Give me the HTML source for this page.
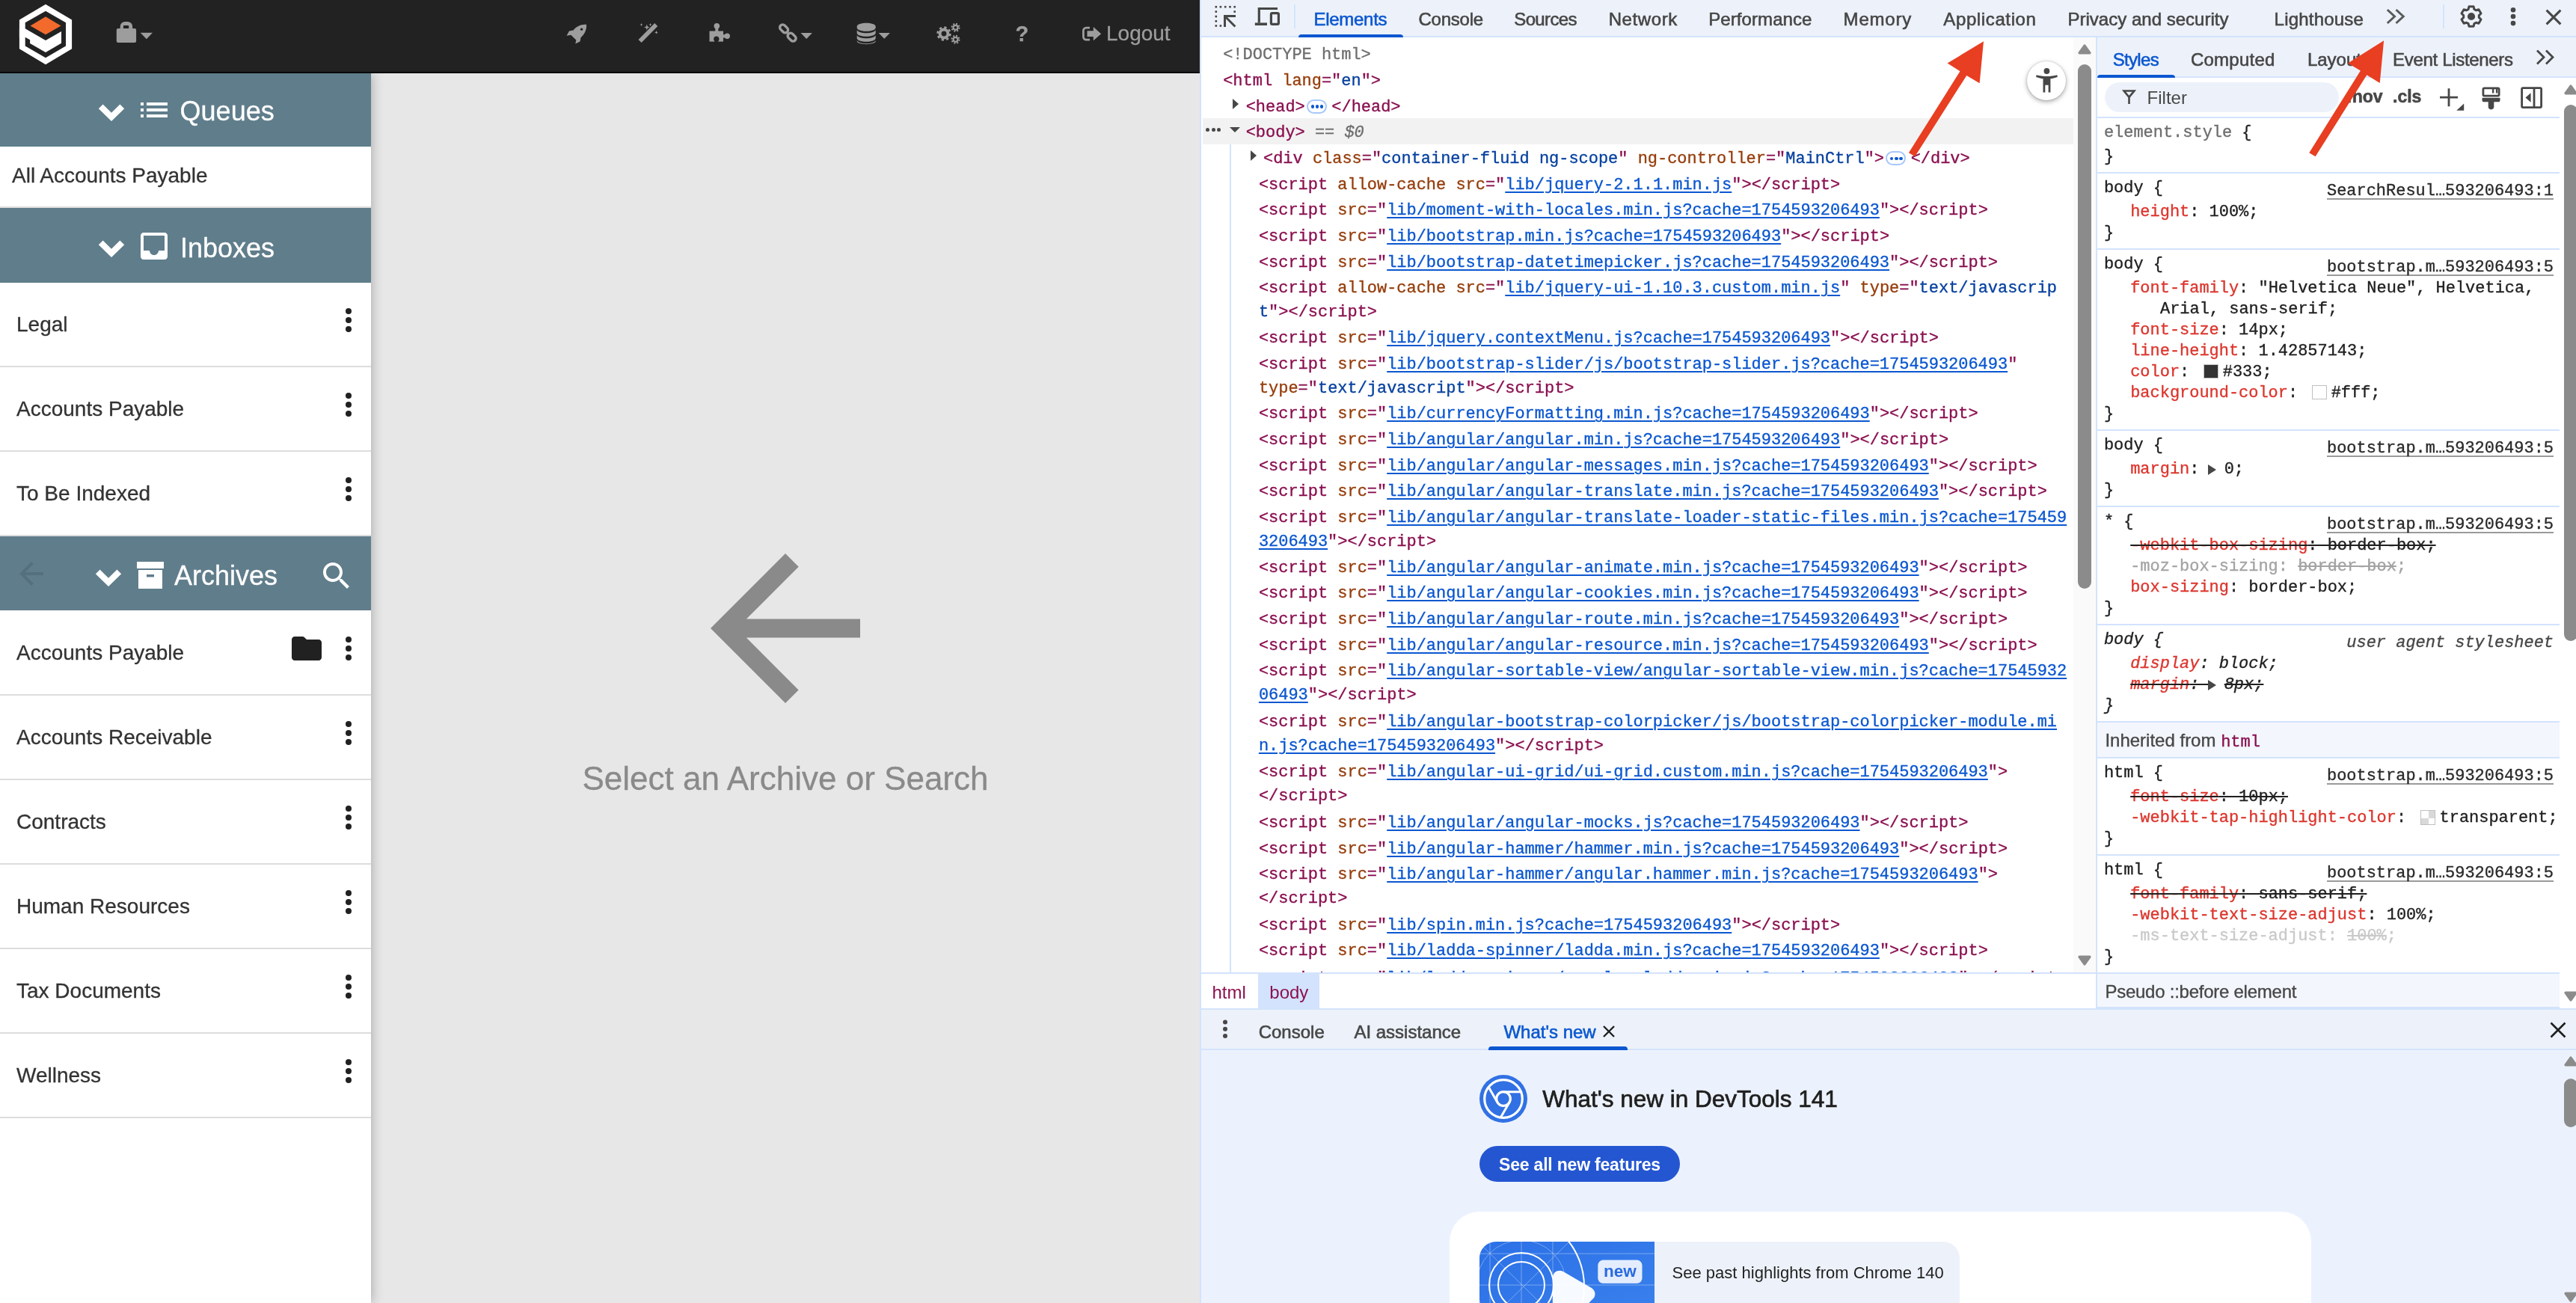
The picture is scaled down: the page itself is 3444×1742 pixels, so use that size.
<!DOCTYPE html>
<html lang="en">
<head>
<meta charset="utf-8">
<title>Archives</title>
<style>
*{box-sizing:border-box;margin:0;padding:0}
html,body{width:3444px;height:1742px;overflow:hidden;background:#fff}
body{position:relative;font-family:"Liberation Sans",Arial,sans-serif;color:#333}
.abs{position:absolute}
svg{display:block;overflow:visible}
/* ---------- app pane ---------- */
#app{-webkit-text-stroke:0.3px currentColor;will-change:transform;position:absolute;left:0;top:0;width:1604px;height:1742px;background:#e7e7e7;overflow:hidden}
#nav{position:absolute;left:0;top:0;width:1604px;height:98px;background:#222;border-bottom:2px solid #080808}
#nav .ic{position:absolute;fill:#9d9d9d}
#nav .txt{position:absolute;color:#9d9d9d;font-size:28px;line-height:32px;white-space:nowrap}
.caret{position:absolute;width:0;height:0;border-left:8px solid transparent;border-right:8px solid transparent;border-top:8px solid #9d9d9d}
#side{position:absolute;left:0;top:98px;width:496px;height:1644px;background:#fff;box-shadow:1px 0 15px rgba(0,0,0,.27)}
.hdr{position:absolute;left:0;width:496px;background:#607d8b;color:#fff;font-size:36px;white-space:nowrap}
.hdr span{position:absolute;line-height:40px}
.hdr svg{position:absolute;fill:#fff}
.row{position:absolute;left:0;width:496px;height:113px;border-bottom:2px solid #ddd;font-size:28px;color:#333;white-space:nowrap}
.row span{position:absolute;left:22px;top:40.6px;line-height:32px}
.row .dots{position:absolute;left:462px;top:34.4px;width:8px}
.row .dots i{display:block;width:8px;height:8px;border-radius:50%;background:#212121;margin-bottom:4px}
#empty{position:absolute;left:496px;top:98px;width:1108px;height:1644px}
#empty .msg{position:absolute;left:0;width:1108px;top:917.8px;text-align:center;font-size:44px;line-height:50px;color:#8a8a8a;white-space:nowrap}
/* ---------- devtools ---------- */
#dt{will-change:transform;position:absolute;left:1604px;top:0;width:1840px;height:1742px;background:#fff;border-left:2px solid #d3e3fd;font-size:24px;color:#1f1f1f;overflow:hidden}
.bar{position:absolute;background:#edf2fa;border-bottom:2px solid #d3e3fd}
.tab{-webkit-text-stroke:0.6px currentColor;position:absolute;white-space:nowrap;color:#474747;font-size:24px;line-height:30px}
.tab.sel{color:#0b57d0}
.ul{position:absolute;height:4px;background:#0b57d0;border-radius:4px 4px 0 0}
.mono{font-family:"Liberation Mono","DejaVu Sans Mono",monospace;font-size:21.96px;-webkit-text-stroke:0.35px currentColor}
.kd{display:block;width:6px;height:6px;border-radius:50%;background:#474747;margin-bottom:4px}
#el{position:absolute;left:0;top:50px;width:1196px;height:1250px;background:#fff;overflow:hidden}
#el .r{position:absolute;left:0;white-space:nowrap;line-height:32px;padding-top:3.9px}
.t{color:#8a1050}.an{color:#963e0c}.av{color:#0842a0}.lk{color:#0b57d0;text-decoration:underline;text-decoration-thickness:2px;text-underline-offset:3px}.dc{color:#6e6e6e}
.eq{color:#6e6e6e;font-style:italic}
.selbg{position:absolute;left:2px;width:1164px;background:#f2f2f2}
.guide{position:absolute;left:38.4px;top:142.6px;width:2px;height:1200px;background:#d3e3fd}
.arr{position:absolute;top:7.8px;width:0;height:0;border-left:8.3px solid #474747;border-top:7.6px solid transparent;border-bottom:7.6px solid transparent}
.arr.d{top:11.8px;border-left:7.85px solid transparent;border-right:7.85px solid transparent;border-top:7.7px solid #474747;border-bottom:0}
.dots3{position:absolute;left:6.3px;top:12.9px;width:22px;height:5px}
.dots3 i{display:block;float:left;width:5px;height:5px;border-radius:50%;background:#474747;margin-right:2.3px}
.pill{display:inline-block;width:27px;height:19px;border:2px solid #a8c7fa;border-radius:10px;margin:0 6.2px 0 2.4px;vertical-align:4px;padding:5.3px 0 0 3.6px;line-height:0;font-size:0;white-space:nowrap;background:#fff}
.pill i{display:inline-block;width:4.4px;height:4.4px;border-radius:50%;background:#0b57d0;margin-right:1.8px}
#st{position:absolute;left:1198px;top:50px;width:640px;height:1298px;background:#fff;overflow:hidden}
#secs{position:absolute;left:0;top:106px;width:618px;color:#1f1f1f}
.sec{border-top:2px solid #d3e3fd;padding:6.13px 0 5.87px;position:relative}
.sl{height:28px;line-height:28px;margin-bottom:4px;padding-left:8.9px;white-space:nowrap;position:relative}
.es{color:#6e6e6e}
.lnk{position:absolute;right:8px;top:4px;text-decoration:underline;text-decoration-color:#9a9a9a;text-decoration-thickness:2px;text-underline-offset:4px;color:#2a2a2a}
.lnk.nou{text-decoration:none;color:#474747}
.pl{height:28px;line-height:28px;padding-left:44.2px;white-space:nowrap}
.pl.w{padding-left:84px}
.pl0{height:28px;line-height:28px;padding-left:8.9px}
.pn{color:#dc362e}
.lt{text-decoration:line-through;text-decoration-color:#1f1f1f;text-decoration-thickness:2px}
.gr{color:#a3a3a3}.gr2{color:#c9c9c9}
.ltg{text-decoration:line-through;text-decoration-thickness:2px}
.sw{display:inline-block;width:19.6px;height:19.6px;border:1.5px solid #c0c0c0;margin:0 5.9px 0 5.8px;vertical-align:-3.4px}
.sw.chk{background:conic-gradient(#d9d9d9 0 25%,#fff 0 50%,#d9d9d9 0 75%,#fff 0) 0 0/19.6px 19.6px !important}
.tri{display:inline-block;width:0;height:0;border-left:11.7px solid #474747;border-top:7.3px solid transparent;border-bottom:7.3px solid transparent;margin:0 10.4px 0 -1.3px;vertical-align:-2px}
.it{font-style:italic}
.inh{border-top:2px solid #d3e3fd;height:48.3px;background:#f3f6fc;font-family:"Liberation Sans",Arial,sans-serif;font-size:24px;line-height:30px;padding:9px 0 0 10.4px;color:#474747;white-space:nowrap}
.sbar{position:absolute;width:18px;background:#8b8b8b;border-radius:9px}
.sup{position:absolute;width:0;height:0;border-left:9px solid transparent;border-right:9px solid transparent;border-bottom:13.7px solid #8b8b8b}
.sdn{position:absolute;width:0;height:0;border-left:9px solid transparent;border-right:9px solid transparent;border-top:13.7px solid #8b8b8b}
.kd.k2{width:6.6px;height:6.6px;margin-bottom:2.3px}
</style>
</head>
<body>
<div id="app">
  <div id="empty">
    <svg class="abs" style="left:404px;top:592px" width="300" height="300" viewBox="0 0 24 24"><path fill="#8a8a8a" d="M20 11H7.83l5.59-5.59L12 4l-8 8 8 8 1.41-1.41L7.83 13H20v-2z"/></svg>
    <div class="msg">Select an Archive or Search</div>
  </div>
  <div id="side">

    <div class="hdr" style="top:0;height:97.7px">
      <svg style="left:131px;top:41px" width="36" height="24" viewBox="0 0 36 24"><path d="M18 23 L0.8 6.2 L6.6 0.6 L18 11.8 L29.4 0.6 L35.2 6.2 Z"/></svg>
      <svg style="left:181.6px;top:25.4px" width="48" height="48" viewBox="0 0 24 24"><path d="M3 13h2v-2H3v2zm0 4h2v-2H3v2zm0-8h2V7H3v2zm4 4h14v-2H7v2zm0 4h14v-2H7v2zM7 7v2h14V7H7z"/></svg>
      <span style="left:240.6px;top:31px">Queues</span>
    </div>
    <div class="row" style="top:97.7px;height:82.2px"><span style="left:16px;top:23.7px">All Accounts Payable</span></div>
    <div class="hdr" style="top:179.9px;height:99.75px">
      <svg style="left:131px;top:43px" width="36" height="24" viewBox="0 0 36 24"><path d="M18 23 L0.8 6.2 L6.6 0.6 L18 11.8 L29.4 0.6 L35.2 6.2 Z"/></svg>
      <svg style="left:182px;top:27px" width="48" height="48" viewBox="0 0 24 24"><path d="M19 3H4.99c-1.11 0-1.98.89-1.98 2L3 19c0 1.1.88 2 1.99 2H19c1.1 0 2-.9 2-2V5c0-1.11-.9-2-2-2zm0 12h-4c0 1.66-1.35 3-3 3s-3-1.34-3-3H4.99V5H19v10z"/></svg>
      <span style="left:241px;top:33.7px">Inboxes</span>
    </div>
    <div class="row" style="top:279.65px"><span>Legal</span><div class="dots"><i></i><i></i><i></i></div></div>
    <div class="row" style="top:392.65px"><span>Accounts Payable</span><div class="dots"><i></i><i></i><i></i></div></div>
    <div class="row" style="top:505.65px"><span>To Be Indexed</span><div class="dots"><i></i><i></i><i></i></div></div>
    <div class="hdr" style="top:618.65px;height:99.85px">
      <svg style="left:18px;top:26px;fill:#54707d" width="48" height="48" viewBox="0 0 24 24"><path d="M20 11H7.83l5.59-5.59L12 4l-8 8 8 8 1.41-1.41L7.83 13H20v-2z"/></svg>
      <svg style="left:127px;top:44px" width="36" height="24" viewBox="0 0 36 24"><path d="M18 23 L0.8 6.2 L6.6 0.6 L18 11.8 L29.4 0.6 L35.2 6.2 Z"/></svg>
      <svg style="left:183px;top:34.5px" width="36" height="36" viewBox="0 0 36 36"><path d="M0 0h36v9H0z M2 11h32v25H2z M13 17v3.4h10V17z" fill-rule="evenodd"/></svg>
      <span style="left:233px;top:33px">Archives</span>
      <svg style="left:426px;top:29px" width="48" height="48" viewBox="0 0 24 24"><path d="M15.5 14h-.79l-.28-.27C15.41 12.59 16 11.11 16 9.5 16 5.91 13.09 3 9.5 3S3 5.91 3 9.5 5.91 16 9.5 16c1.61 0 3.09-.59 4.23-1.57l.27.28v.79l5 4.99L20.49 19l-4.99-5zm-6 0C7.01 14 5 11.99 5 9.5S7.01 5 9.5 5 14 7.01 14 9.5 11.99 14 9.5 14z"/></svg>
    </div>
    <div class="row" style="top:718.50px"><span>Accounts Payable</span><svg class="abs" style="left:386px;top:26.5px" width="48" height="48" viewBox="0 0 24 24"><path fill="#212121" d="M10.59 4.59C10.21 4.21 9.7 4 9.17 4H4c-1.1 0-1.99.9-1.99 2L2 18c0 1.1.9 2 2 2h16c1.1 0 2-.9 2-2V8c0-1.1-.9-2-2-2h-8l-1.41-1.41z"/></svg><div class="dots"><i></i><i></i><i></i></div></div>
    <div class="row" style="top:831.50px"><span>Accounts Receivable</span><div class="dots"><i></i><i></i><i></i></div></div>
    <div class="row" style="top:944.50px"><span>Contracts</span><div class="dots"><i></i><i></i><i></i></div></div>
    <div class="row" style="top:1057.50px"><span>Human Resources</span><div class="dots"><i></i><i></i><i></i></div></div>
    <div class="row" style="top:1170.50px"><span>Tax Documents</span><div class="dots"><i></i><i></i><i></i></div></div>
    <div class="row" style="top:1283.50px"><span>Wellness</span><div class="dots"><i></i><i></i><i></i></div></div>
  </div>
  <div id="nav">

    <svg class="abs" style="left:0;top:0" width="240" height="96" viewBox="0 0 240 96">
      <polygon fill="#fff" points="61,5.8 96.1,26.6 96.1,65.2 61,86.2 25.9,65.2 25.9,26.6"/>
      <polygon fill="#222" points="61,14.7 88,30.3 88,61.5 61,77.3 33.7,61.5 33.7,30.3"/>
      <polygon fill="#f26a2c" points="61,22.2 81.5,34.5 61,46.3 40.5,34.5"/>
      <polygon fill="#fff" points="25.9,38.2 33.7,38.2 61,54 82,41.9 82,57.8 61,69.9 40.1,58 40.1,53.3 33.7,49.8 25.9,49.8"/>
      <g fill="#9d9d9d">
        <path fill-rule="evenodd" d="M160.7 38 V35.6 A6.7 6.7 0 0 1 167.4 28.9 H170.4 A6.7 6.7 0 0 1 177.1 35.6 V38 H180 A2.1 2.1 0 0 1 182.1 40.1 V54.9 A2.1 2.1 0 0 1 180 57 H157.9 A2.1 2.1 0 0 1 155.8 54.9 V40.1 A2.1 2.1 0 0 1 157.9 38 Z M164.9 38 H172.2 V35 A1 1 0 0 0 171.2 34 H165.9 A1 1 0 0 0 164.9 35 Z"/>
        <polygon points="187.7,43.8 204,43.8 195.85,52.2"/>
      </g>
    </svg>
    <svg class="abs" style="left:740px;top:20px" width="860" height="60" viewBox="740 20 860 60">
      <g fill="#9d9d9d">
        <!-- rocket -->
        <path fill-rule="evenodd" d="M784 32.8 C776 32.3 770.5 35.5 766.5 40.5 L761 41.5 L757.5 47.8 L763.3 46.8 L770.3 53.5 L769.3 58.4 L775.5 55.5 L776.5 50.2 C781.5 46 784.5 40 784 32.8 Z M777.6 37.4 a1.7 1.7 0 1 0 0.01 0 Z"/>
        <!-- wand -->
        <path d="M875.2 30.9 L879.3 35 L857.6 57 L853.5 52.9 Z"/>
        <path d="M864.8 32.5 l1 2.9 2.9 1 -2.9 1 -1 2.9 -1 -2.9 -2.9 -1 2.9 -1z M857.5 31 l.6 1.4 1.4 .6 -1.4 .6 -.6 1.4 -.6 -1.4 -1.4 -.6 1.4 -.6z M869.5 31 l.6 1.4 1.4 .6 -1.4 .6 -.6 1.4 -.6 -1.4 -1.4 -.6 1.4 -.6z M877.5 41 l.7 1.7 1.7 .7 -1.7 .7 -.7 1.7 -.7 -1.7 -1.7 -.7 1.7 -.7z"/>
        <!-- puzzle -->
        <path d="M948.5 41.5H967V55.6H948.5Z"/><circle cx="958.3" cy="34.7" r="3.8"/><path d="M956.3 36H960.3V42H956.3Z"/><circle cx="972.2" cy="48.3" r="3.7"/><path d="M966 46.2H971V50.4H966Z"/><circle cx="957.8" cy="52.2" r="3.6" fill="#222"/><path d="M955.6 53H960V56H955.6Z" fill="#222"/>
        <!-- link -->
        <g fill="none" stroke="#9d9d9d" stroke-width="3.4">
          <rect x="-3.8" y="-6.2" width="7.6" height="12.4" rx="3.8" transform="translate(1048.1 38.4) rotate(-45)"/>
          <rect x="-3.8" y="-6.2" width="7.6" height="12.4" rx="3.8" transform="translate(1058.6 49.6) rotate(-45)"/>
        </g>
        <polygon points="1070.5,44 1085.9,44 1078.2,51.9"/>
        <!-- database -->
        <path d="M1145.7 35.5 C1145.7 29.2 1170.7 29.2 1170.7 35.5 V37 C1170.7 43.3 1145.7 43.3 1145.7 37 Z"/>
        <path d="M1145.7 40.3 C1149 45.6 1167.4 45.6 1170.7 40.3 V44 C1170.7 50.3 1145.7 50.3 1145.7 44 Z"/>
        <path d="M1145.7 47.3 C1149 52.6 1167.4 52.6 1170.7 47.3 V51 C1170.7 57.3 1145.7 57.3 1145.7 51 Z"/>
        <path d="M1145.7 54.3 C1149 59.6 1167.4 59.6 1170.7 54.3 V55 C1170.7 60.5 1145.7 60.5 1145.7 55 Z"/>
        <polygon points="1174.6,43.9 1189.9,43.9 1182.25,51.7"/>
        <!-- cogs -->
        <g fill="none" stroke="#9d9d9d">
          <circle cx="1262" cy="45" r="5.4" stroke-width="4"/>
          <circle cx="1262" cy="45" r="8.4" stroke-width="2.6" stroke-dasharray="3.3 3.3"/>
          <circle cx="1277.5" cy="36.8" r="3" stroke-width="2.2"/>
          <circle cx="1277.5" cy="36.8" r="5" stroke-width="2" stroke-dasharray="1.96 1.96"/>
          <circle cx="1277.5" cy="52.8" r="3" stroke-width="2.2"/>
          <circle cx="1277.5" cy="52.8" r="5" stroke-width="2" stroke-dasharray="1.96 1.96"/>
        </g>
        <!-- logout -->
        <path d="M1457 35.8 H1452.2 A5.2 5.2 0 0 0 1447 41 V49.3 A5.2 5.2 0 0 0 1452.2 54.5 H1457 V51.7 H1452.4 A2.6 2.6 0 0 1 1449.8 49.1 V41.2 A2.6 2.6 0 0 1 1452.4 38.6 H1457 Z"/>
        <path d="M1453.5 41.3 H1461.8 V36 L1472.2 45.15 L1461.8 54.3 V49 H1453.5 Z"/>
      </g>
    </svg>
    <div class="txt" style="left:1357.6px;top:29px;font-weight:700;font-size:29px">?</div>
    <div class="txt" style="left:1479px;top:28.8px">Logout</div>
  </div>
</div>
<div id="dt">
<div class="bar" style="left:0;top:0;width:1838px;height:50px"></div>
<svg class="abs" style="left:0;top:0" width="60" height="48" viewBox="0 0 60 48"><g fill="#474747"><rect x="18.5" y="7.9" width="2.6" height="2.6"/><rect x="24.6" y="7.9" width="2.6" height="2.6"/><rect x="30.9" y="7.9" width="2.6" height="2.6"/><rect x="37.2" y="7.9" width="2.6" height="2.6"/><rect x="43.4" y="7.9" width="2.6" height="2.6"/><rect x="18.5" y="14.3" width="2.6" height="2.6"/><rect x="18.5" y="20.7" width="2.6" height="2.6"/><rect x="18.5" y="27.0" width="2.6" height="2.6"/><rect x="18.5" y="33.2" width="2.6" height="2.6"/><rect x="43.4" y="14.3" width="2.6" height="2.6"/><rect x="24.6" y="33.2" width="2.6" height="2.6"/></g><path d="M46 21.6H31.5V36 M32.4 22.5L45.4 35.5" fill="none" stroke="#474747" stroke-width="3"/></svg>
<svg class="abs" style="left:70px;top:6px" width="36" height="32" viewBox="0 0 36 32"><g fill="none" stroke="#474747" stroke-width="3.2">
<path d="M7.3 24.5V5.5H32"/><path d="M1.8 26.2H18" stroke-width="3.6"/><rect x="23.4" y="11.6" width="10" height="14.8" rx="1.6"/></g></svg>
<div class="abs" style="left:124px;top:6px;width:2px;height:32px;background:#d3e3fd"></div>
<div class="tab sel" style="left:150.4px;top:10.6px;letter-spacing:-0.27px">Elements</div>
<div class="tab" style="left:290.4px;top:10.6px;letter-spacing:-0.22px">Console</div>
<div class="tab" style="left:418.3px;top:10.6px;letter-spacing:-0.64px">Sources</div>
<div class="tab" style="left:544.7px;top:10.6px;letter-spacing:0.6px">Network</div>
<div class="tab" style="left:678.3px;top:10.6px;letter-spacing:0.07px">Performance</div>
<div class="tab" style="left:858.6px;top:10.6px;letter-spacing:0.79px">Memory</div>
<div class="tab" style="left:992.3px;top:10.6px;letter-spacing:0.62px">Application</div>
<div class="tab" style="left:1158.4px;top:10.6px;letter-spacing:0.02px">Privacy and security</div>
<div class="tab" style="left:1434.6px;top:10.6px;letter-spacing:0.2px">Lighthouse</div>
<div class="ul" style="left:129.7px;top:46px;width:140px"></div>
<svg class="abs" style="left:1583.5px;top:11px" width="26" height="22" viewBox="0 0 26 22"><path d="M1.8 2L11.5 11L1.8 20M13.5 2L23.2 11L13.5 20" fill="none" stroke="#5a5a5a" stroke-width="3"/></svg>
<div class="abs" style="left:1660px;top:6px;width:2px;height:32px;background:#d3e3fd"></div>
<svg class="abs" style="left:1682px;top:6px" width="32" height="32" viewBox="0 0 32 32"><path d="M19.90 6.36 L19.06 2.75 L12.94 2.75 L12.10 6.36 L9.60 7.80 L6.05 6.72 L2.99 12.02 L5.70 14.55 L5.70 17.45 L2.99 19.98 L6.05 25.28 L9.60 24.20 L12.10 25.64 L12.94 29.25 L19.06 29.25 L19.90 25.64 L22.40 24.20 L25.95 25.28 L29.01 19.98 L26.30 17.45 L26.30 14.55 L29.01 12.02 L25.95 6.72 L22.40 7.80Z" fill="none" stroke="#474747" stroke-width="3" stroke-linejoin="round"/><circle cx="16" cy="16" r="5.1" fill="#474747"/></svg>
<svg class="abs" style="left:1749.9px;top:8px" width="8" height="30" viewBox="0 0 8 30"><g fill="#474747"><circle cx="4" cy="5.3" r="3.3"/><circle cx="4" cy="14" r="3.3"/><circle cx="4" cy="23.1" r="3.3"/></g></svg>
<svg class="abs" style="left:1797px;top:11.6px" width="22" height="22" viewBox="0 0 22 22"><path d="M1.6 1.6L20.4 20.4M20.4 1.6L1.6 20.4" fill="none" stroke="#474747" stroke-width="3"/></svg>
<div id="el" class="mono">
<div class="guide"></div>
<div class="r" style="top:4.40px;padding-left:29.2px"><span class="dc">&lt;!DOCTYPE html&gt;</span></div>
<div class="r" style="top:39.07px;padding-left:29.2px"><span class="t">&lt;html</span><span class="an"> lang</span><span class="t">="</span><span class="av">en</span><span class="t">"&gt;</span></div>
<div class="r" style="top:73.74px;padding-left:59.7px"><span class="arr" style="left:41.9px"></span><span class="t">&lt;head&gt;</span><span class="pill"><i></i><i></i><i></i></span><span class="t">&lt;/head&gt;</span></div>
<div class="selbg" style="top:108.11px;height:34.67px"></div>
<div class="r" style="top:108.41px;padding-left:59.7px"><span class="dots3"><i></i><i></i><i></i></span><span class="arr d" style="left:38.2px"></span><span class="t">&lt;body&gt;</span><span class="eq"> == $0</span></div>
<div class="r" style="top:143.08px;padding-left:83px"><span class="arr" style="left:65.6px"></span><span class="t">&lt;div</span><span class="an"> class</span><span class="t">="</span><span class="av">container-fluid ng-scope</span><span class="t">"</span><span class="an"> ng-controller</span><span class="t">="</span><span class="av">MainCtrl</span><span class="t">"&gt;</span><span class="pill"><i></i><i></i><i></i></span><span class="t">&lt;/div&gt;</span></div>
<div class="r" style="top:177.75px;padding-left:76.9px"><span class="t">&lt;script</span><span class="an"> allow-cache</span><span class="an"> src</span><span class="t">="</span><span class="lk">lib/jquery-2.1.1.min.js</span><span class="t">"</span><span class="t">&gt;</span><span class="t">&lt;/script&gt;</span></div>
<div class="r" style="top:212.42px;padding-left:76.9px"><span class="t">&lt;script</span><span class="an"> src</span><span class="t">="</span><span class="lk">lib/moment-with-locales.min.js?cache=1754593206493</span><span class="t">"</span><span class="t">&gt;</span><span class="t">&lt;/script&gt;</span></div>
<div class="r" style="top:247.09px;padding-left:76.9px"><span class="t">&lt;script</span><span class="an"> src</span><span class="t">="</span><span class="lk">lib/bootstrap.min.js?cache=1754593206493</span><span class="t">"</span><span class="t">&gt;</span><span class="t">&lt;/script&gt;</span></div>
<div class="r" style="top:281.76px;padding-left:76.9px"><span class="t">&lt;script</span><span class="an"> src</span><span class="t">="</span><span class="lk">lib/bootstrap-datetimepicker.js?cache=1754593206493</span><span class="t">"</span><span class="t">&gt;</span><span class="t">&lt;/script&gt;</span></div>
<div class="r" style="top:316.43px;padding-left:76.9px"><span class="t">&lt;script</span><span class="an"> allow-cache</span><span class="an"> src</span><span class="t">="</span><span class="lk">lib/jquery-ui-1.10.3.custom.min.js</span><span class="t">"</span><span class="an"> type</span><span class="t">="</span><span class="av">text/javascrip</span><br><span class="av">t</span><span class="t">"</span><span class="t">&gt;</span><span class="t">&lt;/script&gt;</span></div>
<div class="r" style="top:383.10px;padding-left:76.9px"><span class="t">&lt;script</span><span class="an"> src</span><span class="t">="</span><span class="lk">lib/jquery.contextMenu.js?cache=1754593206493</span><span class="t">"</span><span class="t">&gt;</span><span class="t">&lt;/script&gt;</span></div>
<div class="r" style="top:417.77px;padding-left:76.9px"><span class="t">&lt;script</span><span class="an"> src</span><span class="t">="</span><span class="lk">lib/bootstrap-slider/js/bootstrap-slider.js?cache=1754593206493</span><span class="t">"</span><br><span class="an">type</span><span class="t">="</span><span class="av">text/javascript</span><span class="t">"</span><span class="t">&gt;</span><span class="t">&lt;/script&gt;</span></div>
<div class="r" style="top:484.44px;padding-left:76.9px"><span class="t">&lt;script</span><span class="an"> src</span><span class="t">="</span><span class="lk">lib/currencyFormatting.min.js?cache=1754593206493</span><span class="t">"</span><span class="t">&gt;</span><span class="t">&lt;/script&gt;</span></div>
<div class="r" style="top:519.11px;padding-left:76.9px"><span class="t">&lt;script</span><span class="an"> src</span><span class="t">="</span><span class="lk">lib/angular/angular.min.js?cache=1754593206493</span><span class="t">"</span><span class="t">&gt;</span><span class="t">&lt;/script&gt;</span></div>
<div class="r" style="top:553.78px;padding-left:76.9px"><span class="t">&lt;script</span><span class="an"> src</span><span class="t">="</span><span class="lk">lib/angular/angular-messages.min.js?cache=1754593206493</span><span class="t">"</span><span class="t">&gt;</span><span class="t">&lt;/script&gt;</span></div>
<div class="r" style="top:588.45px;padding-left:76.9px"><span class="t">&lt;script</span><span class="an"> src</span><span class="t">="</span><span class="lk">lib/angular/angular-translate.min.js?cache=1754593206493</span><span class="t">"</span><span class="t">&gt;</span><span class="t">&lt;/script&gt;</span></div>
<div class="r" style="top:623.12px;padding-left:76.9px"><span class="t">&lt;script</span><span class="an"> src</span><span class="t">="</span><span class="lk">lib/angular/angular-translate-loader-static-files.min.js?cache=175459</span><br><span class="lk">3206493</span><span class="t">"</span><span class="t">&gt;</span><span class="t">&lt;/script&gt;</span></div>
<div class="r" style="top:689.79px;padding-left:76.9px"><span class="t">&lt;script</span><span class="an"> src</span><span class="t">="</span><span class="lk">lib/angular/angular-animate.min.js?cache=1754593206493</span><span class="t">"</span><span class="t">&gt;</span><span class="t">&lt;/script&gt;</span></div>
<div class="r" style="top:724.46px;padding-left:76.9px"><span class="t">&lt;script</span><span class="an"> src</span><span class="t">="</span><span class="lk">lib/angular/angular-cookies.min.js?cache=1754593206493</span><span class="t">"</span><span class="t">&gt;</span><span class="t">&lt;/script&gt;</span></div>
<div class="r" style="top:759.13px;padding-left:76.9px"><span class="t">&lt;script</span><span class="an"> src</span><span class="t">="</span><span class="lk">lib/angular/angular-route.min.js?cache=1754593206493</span><span class="t">"</span><span class="t">&gt;</span><span class="t">&lt;/script&gt;</span></div>
<div class="r" style="top:793.80px;padding-left:76.9px"><span class="t">&lt;script</span><span class="an"> src</span><span class="t">="</span><span class="lk">lib/angular/angular-resource.min.js?cache=1754593206493</span><span class="t">"</span><span class="t">&gt;</span><span class="t">&lt;/script&gt;</span></div>
<div class="r" style="top:828.47px;padding-left:76.9px"><span class="t">&lt;script</span><span class="an"> src</span><span class="t">="</span><span class="lk">lib/angular-sortable-view/angular-sortable-view.min.js?cache=17545932</span><br><span class="lk">06493</span><span class="t">"</span><span class="t">&gt;</span><span class="t">&lt;/script&gt;</span></div>
<div class="r" style="top:895.97px;padding-left:76.9px"><span class="t">&lt;script</span><span class="an"> src</span><span class="t">="</span><span class="lk">lib/angular-bootstrap-colorpicker/js/bootstrap-colorpicker-module.mi</span><br><span class="lk">n.js?cache=1754593206493</span><span class="t">"</span><span class="t">&gt;</span><span class="t">&lt;/script&gt;</span></div>
<div class="r" style="top:963.47px;padding-left:76.9px"><span class="t">&lt;script</span><span class="an"> src</span><span class="t">="</span><span class="lk">lib/angular-ui-grid/ui-grid.custom.min.js?cache=1754593206493</span><span class="t">"</span><span class="t">&gt;</span><br><span class="t">&lt;/script&gt;</span></div>
<div class="r" style="top:1030.97px;padding-left:76.9px"><span class="t">&lt;script</span><span class="an"> src</span><span class="t">="</span><span class="lk">lib/angular/angular-mocks.js?cache=1754593206493</span><span class="t">"</span><span class="t">&gt;</span><span class="t">&lt;/script&gt;</span></div>
<div class="r" style="top:1065.64px;padding-left:76.9px"><span class="t">&lt;script</span><span class="an"> src</span><span class="t">="</span><span class="lk">lib/angular-hammer/hammer.min.js?cache=1754593206493</span><span class="t">"</span><span class="t">&gt;</span><span class="t">&lt;/script&gt;</span></div>
<div class="r" style="top:1100.31px;padding-left:76.9px"><span class="t">&lt;script</span><span class="an"> src</span><span class="t">="</span><span class="lk">lib/angular-hammer/angular.hammer.min.js?cache=1754593206493</span><span class="t">"</span><span class="t">&gt;</span><br><span class="t">&lt;/script&gt;</span></div>
<div class="r" style="top:1167.81px;padding-left:76.9px"><span class="t">&lt;script</span><span class="an"> src</span><span class="t">="</span><span class="lk">lib/spin.min.js?cache=1754593206493</span><span class="t">"</span><span class="t">&gt;</span><span class="t">&lt;/script&gt;</span></div>
<div class="r" style="top:1202.48px;padding-left:76.9px"><span class="t">&lt;script</span><span class="an"> src</span><span class="t">="</span><span class="lk">lib/ladda-spinner/ladda.min.js?cache=1754593206493</span><span class="t">"</span><span class="t">&gt;</span><span class="t">&lt;/script&gt;</span></div>
<div class="r" style="top:1238.75px;padding-left:76.9px"><span class="t">&lt;script</span><span class="an"> src</span><span class="t">="</span><span class="lk">lib/ladda-spinner/angular-ladda.min.js?cache=1754593206493</span><span class="t">"</span><span class="t">&gt;</span><span class="t">&lt;/script&gt;</span></div>
</div>
<div class="abs" style="left:1166px;top:50px;width:30px;height:1250px;background:#fafafa"></div>
<div class="abs" style="left:1196px;top:50px;width:2px;height:1298px;background:#d3e3fd;z-index:3"></div>
<svg class="abs" style="left:1172px;top:59.3px" width="18" height="14" viewBox="0 0 18 14"><path d="M9 2.2L15.8 11.8H2.2Z" fill="#8b8b8b" stroke="#8b8b8b" stroke-width="3.6" stroke-linejoin="round"/></svg>
<div class="sbar" style="left:1172px;top:85.9px;height:701px"></div>
<svg class="abs" style="left:1172px;top:1276.5px" width="18" height="14" viewBox="0 0 18 14"><path d="M9 11.8L15.8 2.2H2.2Z" fill="#8b8b8b" stroke="#8b8b8b" stroke-width="3.6" stroke-linejoin="round"/></svg>
<div class="abs" style="left:1103.9px;top:81.8px;width:52px;height:52px;border-radius:50%;background:#fff;box-shadow:0 2px 6px rgba(0,0,0,.35),0 0 2px rgba(0,0,0,.2)"></div>
<svg class="abs" style="left:1115.5px;top:91px" width="29" height="33" viewBox="0 0 29 33"><g fill="#474747"><circle cx="14.4" cy="4" r="3.9"/><path d="M0.6 9.2C9 11.6 20 11.6 28.3 9.2L28.8 12C25 13.3 22 13.9 19.4 14.3V32.6H16.6V22.8H12.3V32.6H9.5V14.3C7 13.9 4 13.3 0.1 12Z"/></g></svg>
<div id="st">
<div class="bar" style="left:0;top:0;width:640px;height:53.5px"></div>
<div class="tab sel" style="left:20.7px;top:14.6px;letter-spacing:-0.68px">Styles</div>
<div class="tab" style="left:124.9px;top:14.6px;letter-spacing:0.25px">Computed</div>
<div class="tab" style="left:280.9px;top:14.6px;letter-spacing:0.01px">Layout</div>
<div class="tab" style="left:395.1px;top:14.6px;letter-spacing:-0.32px">Event Listeners</div>
<div class="ul" style="left:0;top:49.5px;width:103.5px"></div>
<svg class="abs" style="left:586px;top:16px" width="26" height="22" viewBox="0 0 26 22"><path d="M2 1.5L11 10.5L2 19.5M14 1.5L23 10.5L14 19.5" fill="none" stroke="#474747" stroke-width="2.8"/></svg>
<div class="abs" style="left:0;top:53.5px;width:618px;height:54.5px;background:#fff;border-bottom:2px solid #d3e3fd"></div>
<div class="abs" style="left:10px;top:59.8px;width:313px;height:40px;border-radius:20px;background:#edf2fa"></div>
<svg class="abs" style="left:32.7px;top:69.4px" width="20" height="21" viewBox="0 0 20 21"><path d="M2.6 2.5H16.4L9.5 10.9Z M9.5 10.4V19.9" fill="none" stroke="#474747" stroke-width="2.6" stroke-linejoin="miter"/></svg>
<div class="tab" style="left:66.6px;top:65.5px;-webkit-text-stroke:0">Filter</div>
<div class="tab" style="left:333px;top:63.8px;font-weight:700;font-size:23px;color:#474747">:hov</div>
<div class="tab" style="left:395px;top:63.8px;font-weight:700;font-size:23px;color:#474747">.cls</div>
<svg class="abs" style="left:458px;top:64px" width="34" height="34" viewBox="0 0 34 34"><path d="M0 16.2H24M12 4.2V28.2" fill="none" stroke="#474747" stroke-width="2.8"/><path d="M32.2 24.4V33.8H22.2Z" fill="#474747"/></svg>
<svg class="abs" style="left:513.6px;top:64.6px" width="26" height="32" viewBox="0 0 26 32"><g fill="none" stroke="#474747"><rect x="1.9" y="2.9" width="21.2" height="10.2" rx="1.6" stroke-width="2.8"/><path d="M15.1 2V9.6M20.1 2V9.6" stroke-width="2.4"/></g><path fill="#474747" d="M0.5 15.7H24.5V18.7A2.6 2.6 0 0 1 21.9 21.3H16.3V27.6A3.8 3.8 0 0 1 8.7 27.6V21.3H3.1A2.6 2.6 0 0 1 0.5 18.7Z"/></svg>
<svg class="abs" style="left:565.5px;top:65.6px" width="30" height="30" viewBox="0 0 30 30"><g fill="none" stroke="#474747" stroke-width="2.8"><rect x="1.6" y="1.6" width="26" height="26" rx="1.5"/><path d="M18 2V28"/></g><path fill="#474747" d="M13.6 8.2V20.8L6.4 14.5Z"/></svg>
<div id="secs" class="mono"><div class="sec "><div class="sl"><span class="sn"><span class="es">element.style</span></span> {</div><div class="pl0">}</div></div>
<div class="sec "><div class="sl"><span class="sn">body</span> {<span class="lnk">SearchResul…593206493:1</span></div><div class="pl "><span class="pn">height</span>: 100%;</div><div class="pl0">}</div></div>
<div class="sec "><div class="sl"><span class="sn">body</span> {<span class="lnk">bootstrap.m…593206493:5</span></div><div class="pl"><span class="pn">font-family</span>: "Helvetica Neue", Helvetica,</div><div class="pl w">Arial, sans-serif;</div><div class="pl "><span class="pn">font-size</span>: 14px;</div><div class="pl "><span class="pn">line-height</span>: 1.42857143;</div><div class="pl "><span class="pn">color</span>: <span class="sw " style="background:#333"></span>#333;</div><div class="pl "><span class="pn">background-color</span>: <span class="sw " style="background:#fff"></span>#fff;</div><div class="pl0">}</div></div>
<div class="sec "><div class="sl"><span class="sn">body</span> {<span class="lnk">bootstrap.m…593206493:5</span></div><div class="pl "><span class="pn">margin</span>: <span class="tri"></span>0;</div><div class="pl0">}</div></div>
<div class="sec "><div class="sl"><span class="sn">*</span> {<span class="lnk">bootstrap.m…593206493:5</span></div><div class="pl"><span class="lt"><span class="pn">-webkit-box-sizing</span>: border-box;</span></div><div class="pl gr">-moz-box-sizing: <span class="ltg">border-box</span>;</div><div class="pl "><span class="pn">box-sizing</span>: border-box;</div><div class="pl0">}</div></div>
<div class="sec it"><div class="sl"><span class="sn">body</span> {<span class="lnk nou"><i class="ua">user agent stylesheet</i></span></div><div class="pl "><span class="pn">display</span>: block;</div><div class="pl"><span class="lt"><span class="pn">margin</span>: <span class="tri"></span>8px;</span></div><div class="pl0">}</div></div>
<div class="inh"><span>Inherited from </span><span class="mono t" style="font-size:22px">html</span></div>
<div class="sec "><div class="sl"><span class="sn">html</span> {<span class="lnk">bootstrap.m…593206493:5</span></div><div class="pl"><span class="lt"><span class="pn">font-size</span>: 10px;</span></div><div class="pl "><span class="pn">-webkit-tap-highlight-color</span>: <span class="sw chk" style="background:transparent"></span>transparent;</div><div class="pl0">}</div></div>
<div class="sec "><div class="sl"><span class="sn">html</span> {<span class="lnk">bootstrap.m…593206493:5</span></div><div class="pl"><span class="lt"><span class="pn">font-family</span>: sans-serif;</span></div><div class="pl "><span class="pn">-webkit-text-size-adjust</span>: 100%;</div><div class="pl gr2">-ms-text-size-adjust: <span class="ltg">100%</span>;</div><div class="pl0">}</div></div>
<div class="inh" style="height:47.5px"><span style="letter-spacing:-0.25px">Pseudo ::before element</span></div></div>
<div class="abs" style="left:0;top:1296px;width:618px;height:2px;background:#d3e3fd"></div>
<div class="abs" style="left:618px;top:53.5px;width:22px;height:1246px;background:#fff"></div>
<div class="sbar" style="left:624px;top:89.9px;height:716.8000000000001px"></div>
<svg class="abs" style="left:624px;top:63px" width="18" height="14" viewBox="0 0 18 14"><path d="M9 2.2L15.8 11.8H2.2Z" fill="#8b8b8b" stroke="#8b8b8b" stroke-width="3.6" stroke-linejoin="round"/></svg>
<svg class="abs" style="left:624px;top:1275px" width="18" height="14" viewBox="0 0 18 14"><path d="M9 11.8L15.8 2.2H2.2Z" fill="#8b8b8b" stroke="#8b8b8b" stroke-width="3.6" stroke-linejoin="round"/></svg>
</div>
<div class="abs" style="left:0;top:1300px;width:1196px;height:50px;background:#fff;border-top:2px solid #d3e3fd;border-bottom:2px solid #d3e3fd"></div>
<div class="abs" style="left:76px;top:1302px;width:82px;height:46px;background:#d3e3fd"></div>
<div class="tab" style="left:14.4px;top:1311.7px;color:#8c1250;-webkit-text-stroke:0">html</div>
<div class="tab" style="left:91.3px;top:1311.7px;color:#8c1250;-webkit-text-stroke:0">body</div>
<div class="abs" style="left:0;top:1350px;width:1838px;height:392px;background:#ecf2fd"></div>
<div class="abs" style="left:0;top:1350px;width:1838px;height:52px;background:#edf2fa"></div><div class="abs" style="left:0;top:1348px;width:1838px;height:2px;background:#d3e3fd"></div>
<div class="abs" style="left:0;top:1401.6px;width:1838px;height:2px;background:#d3e3fd"></div>
<svg class="abs" style="left:27.6px;top:1360px" width="8" height="30" viewBox="0 0 8 30"><g fill="#474747"><circle cx="4" cy="6.4" r="3"/><circle cx="4" cy="15.7" r="3"/><circle cx="4" cy="24.9" r="3"/></g></svg>
<div class="tab" style="left:76.7px;top:1364.5px">Console</div>
<div class="tab" style="left:204.4px;top:1364.5px">AI assistance</div>
<div class="tab sel" style="left:404.4px;top:1364.5px">What's new</div>
<svg class="abs" style="left:537.2px;top:1370.5px" width="16" height="16" viewBox="0 0 16 16"><path d="M1 1L15 15M15 1L1 15" fill="none" stroke="#1f1f1f" stroke-width="2.4"/></svg>
<div class="ul" style="left:383.7px;top:1399.2px;width:186.3px;height:4.4px"></div>
<svg class="abs" style="left:1803px;top:1366px" width="22" height="22" viewBox="0 0 22 22"><path d="M1.5 1.5L20.5 20.5M20.5 1.5L1.5 20.5" fill="none" stroke="#1f1f1f" stroke-width="2.6"/></svg>
<svg class="abs" style="left:372px;top:1436.5px" width="64" height="64" viewBox="0 0 64 64"><circle cx="32" cy="32" r="32" fill="#3271e4"/><g fill="none" stroke="#fff" stroke-width="3.2"><circle cx="32" cy="32" r="25.3"/><circle cx="32" cy="32" r="9.3"/><path d="M32.00 22.70L55.53 22.70M40.05 36.65L28.29 57.03M23.95 36.65L12.18 16.27" stroke-width="3"/></g></svg>
<div class="abs" style="left:456.2px;top:1449px;font-size:31.5px;line-height:40px;color:#1f1f1f;white-space:nowrap;-webkit-text-stroke:0.7px #1f1f1f">What's new in DevTools 141</div>
<div class="abs" style="left:372px;top:1532px;width:268px;height:47.8px;border-radius:24px;background:#2456d1;color:#fff;font-weight:700;font-size:23px;letter-spacing:-0.2px;line-height:51px;text-align:center;white-space:nowrap">See all new features</div>
<div class="abs" style="left:331.9px;top:1620.2px;width:1152.4px;height:160px;border-radius:40px;background:#fff"></div>
<div class="abs" style="left:372px;top:1660px;width:642px;height:120px;border-radius:22px;background:#edf2fa;overflow:hidden">
<svg class="abs" style="left:0;top:0" width="234" height="120" viewBox="0 0 234 120"><defs><linearGradient id="tg" x1="0" y1="0" x2="1" y2="1"><stop offset="0" stop-color="#2b70e6"/><stop offset="1" stop-color="#3b82ee"/></linearGradient></defs><rect width="234" height="120" fill="url(#tg)"/>
<g fill="none" stroke="#fff" stroke-width="2"><circle cx="56" cy="58" r="31"/><circle cx="56" cy="58" r="43"/><circle cx="42" cy="60" r="98"/></g>
<g fill="none" stroke="#fff" stroke-opacity=".35" stroke-width="1"><path d="M56 0V120M0 58H234M14 0V120M98 0V120M0 16H234M0 2L120 120M120 0L0 118"/><circle cx="56" cy="58" r="60"/></g>
<path d="M98 48C98 40 106 37 112 40L150 62C156 66 156 74 150 78L112 120H98Z" fill="#fff" fill-opacity=".96"/>
<rect x="158.3" y="24.6" width="59.2" height="31.2" rx="7" fill="#e4edfd"/></svg>
<div class="abs" style="left:158.3px;top:24.6px;width:59.2px;height:31.2px;line-height:29px;text-align:center;font-size:22.5px;font-weight:700;color:#2a6be0">new</div>
<div class="abs" style="left:257.6px;top:27px;font-size:22px;line-height:30px;color:#1f1f1f;white-space:nowrap">See past highlights from Chrome 140</div>
</div>
<div class="abs" style="left:1816px;top:1403.6px;width:22px;height:340px;background:#ecf2fd"></div>
<svg class="abs" style="left:1822px;top:1412px" width="18" height="14" viewBox="0 0 18 14"><path d="M9 2.2L15.8 11.8H2.2Z" fill="#8b8b8b" stroke="#8b8b8b" stroke-width="3.6" stroke-linejoin="round"/></svg>
<div class="sbar" style="left:1822px;top:1442.4px;height:64.4px"></div>
<svg class="abs" style="left:1822px;top:1727px" width="18" height="14" viewBox="0 0 18 14"><path d="M9 11.8L15.8 2.2H2.2Z" fill="#8b8b8b" stroke="#8b8b8b" stroke-width="3.6" stroke-linejoin="round"/></svg>
<svg class="abs" style="left:0;top:0;pointer-events:none" width="1838" height="400" viewBox="1606 0 1838 400">
<g fill="#e83e22"><polygon points="2652,55.3 2646.6,111.3 2629.3,100.9 2560.2,209.2 2551.9,204.2 2620.5,95.2 2603.6,84.5"/><polygon points="3187.1,54.2 3181.7,111 3164.3,100.3 3095.6,209.2 3087.3,204.2 3155.9,94.4 3139,84.5"/></g>
</svg>
</div>
</body>
</html>
